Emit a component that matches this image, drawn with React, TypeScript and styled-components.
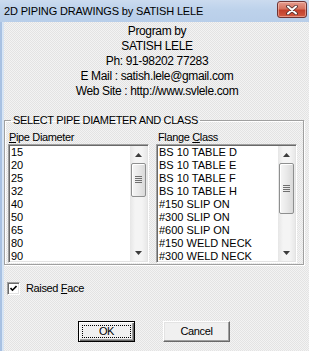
import React from "react";
import styled, { createGlobalStyle } from "styled-components";

const uiFont = `"Liberation Sans", Arial, sans-serif`;

const pipeSizes = [
  "15", "20", "25", "32", "40", "50", "65", "80", "90", "100", "125",
  "150", "200", "250", "300", "350", "400", "450", "500", "550", "600",
];

const flangeClasses = [
  "BS 10 TABLE D", "BS 10 TABLE E", "BS 10 TABLE F", "BS 10 TABLE H",
  "#150 SLIP ON", "#300 SLIP ON", "#600 SLIP ON", "#150 WELD NECK",
  "#300 WELD NECK", "#600 WELD NECK", "#900 WELD NECK", "#1500 WELD NECK",
  "#150 BLIND", "#300 BLIND",
];

const VISIBLE_ROWS = 9;
const TRACK = 81;

const GlobalStyle = createGlobalStyle`
  html, body {
    margin: 0;
    padding: 0;
    width: 309px;
    height: 351px;
    overflow: hidden;
    background: #ececec;
  }
  #root {
    width: 309px;
    height: 351px;
  }
`;

const Window = styled.div`
  width: 313px;
  height: 351px;
  display: flex;
  flex-direction: column;
  font-family: ${uiFont};
  font-size: 11px;
  letter-spacing: -0.35px;
  color: #000;
`;

const TitleBar = styled.div`
  flex: none;
  height: 22px;
  display: flex;
  align-items: flex-start;
  padding: 0 6px 0 4px;
  box-sizing: border-box;
  background: linear-gradient(#cbdbef, #bdd2eb 45%, #b8cee9);
`;

const TitleText = styled.div`
  font-size: 11px;
  letter-spacing: -0.15px;
  line-height: 22px;
  white-space: nowrap;
`;

const CloseButton = styled.div`
  margin-left: auto;
  margin-top: 1px;
  width: 30px;
  height: 17px;
  box-sizing: border-box;
  border: 1px solid #6e3434;
  border-radius: 3px;
  background: linear-gradient(#e59c8f, #d6735f 45%, #c2402c 55%, #d25b42);
  box-shadow: inset 0 0 0 1px rgba(255, 220, 210, 0.45);
  display: flex;
  align-items: center;
  justify-content: center;
`;

const Body = styled.div`
  flex: 1;
  padding: 0 3px 0 2px;
  border-left: 2px solid #a8c1e2;
  box-shadow: inset 2px 0 #d6e4f4;
  background-color: #ececec;
  background-image: repeating-conic-gradient(#f3f3f3 0 25%, #e3e3e3 0 50%);
  background-size: 2px 2px;
  display: flex;
  flex-direction: column;
`;

const Credits = styled.div`
  padding-top: 2px;
  text-align: center;
  font-size: 12px;
  line-height: 15px;
`;

const Group = styled.fieldset`
  margin: 14px 0 0 0;
  width: 300px;
  box-sizing: border-box;
  padding: 3px 6px 1px 3px;
  border: 1px solid #a0a0a0;
  box-shadow: inset 1px 1px #fff, 1px 1px #fff;
`;

const Legend = styled.legend`
  margin-left: 3px;
  padding: 0 2px;
  line-height: 15px;
`;

const Columns = styled.div`
  display: grid;
  grid-template-columns: 141px 141px;
  column-gap: 7px;
`;

const FieldLabel = styled.div<{ $indent: number }>`
  line-height: 13px;
  padding-left: ${(p) => p.$indent}px;
`;

const AccessKey = styled.span`
  text-decoration: underline;
  text-underline-offset: 1px;
`;

const ListBox = styled.div`
  height: 119px;
  box-sizing: border-box;
  display: flex;
  background: #fff;
  border: 1px solid;
  border-color: #a0a0a0 #fff #fff #a0a0a0;
  box-shadow: inset 1px 1px #696969, inset -1px -1px #e3e3e3;
  padding: 1px;
`;

const Rows = styled.div`
  flex: 1;
  overflow: hidden;
`;

const Row = styled.div`
  height: 13px;
  line-height: 13px;
  padding-left: 1px;
  letter-spacing: 0;
  white-space: nowrap;
`;

const ScrollBar = styled.div`
  flex: none;
  width: 17px;
  display: flex;
  flex-direction: column;
  background: linear-gradient(90deg, #e6e6e6, #f4f4f4 30%, #f4f4f4 70%, #e8e8e8);
`;

const ArrowButton = styled.div`
  height: 17px;
  flex: none;
  display: flex;
  align-items: center;
  justify-content: center;
`;

const Track = styled.div`
  flex: 1;
  position: relative;
`;

const Thumb = styled.div`
  position: absolute;
  left: 1px;
  right: 1px;
  box-sizing: border-box;
  border: 1px solid #8e8f8f;
  border-radius: 2px;
  background: linear-gradient(90deg, #f6f6f6, #e9e9e9 50%, #d9d9d9);
  box-shadow: inset 1px 1px #fff;
  display: flex;
  align-items: center;
  justify-content: center;
`;

const CheckRow = styled.label`
  margin: 17px 0 0 3px;
  display: flex;
  align-items: center;
  gap: 6px;
  line-height: 13px;
`;

const CheckBox = styled.span`
  width: 13px;
  height: 13px;
  box-sizing: border-box;
  background: #fff;
  border: 1px solid;
  border-color: #a0a0a0 #fff #fff #a0a0a0;
  box-shadow: inset 1px 1px #696969, inset -1px -1px #e3e3e3;
  display: flex;
  align-items: center;
  justify-content: center;
`;

const ButtonRow = styled.div`
  margin: 26px 0 0 74px;
  display: flex;
  gap: 28px;
`;

const PushButton = styled.div<{ $width: number; $default?: boolean }>`
  width: ${(p) => p.$width}px;
  height: 21px;
  box-sizing: border-box;
  background: #f0f0f0;
  border: 1px solid;
  border-color: ${(p) => (p.$default ? "#000" : "#fff #696969 #696969 #fff")};
  box-shadow: ${(p) =>
    p.$default
      ? "inset 1px 1px #fff, inset -1px -1px #696969, inset -2px -2px #a0a0a0"
      : "inset -1px -1px #a0a0a0, inset 1px 1px #e3e3e3"};
  display: flex;
  align-items: center;
  justify-content: center;
  padding: 3px;
  line-height: 13px;
`;

const FocusRing = styled.div`
  flex: 1;
  align-self: stretch;
  border: 1px dotted #000;
  display: flex;
  align-items: center;
  justify-content: center;
`;

const Arrow = ({ up }: { up?: boolean }) => (
  <svg width="7" height="4" viewBox="0 0 7 4">
    <path d={up ? "M0 4 L3.5 0 L7 4 Z" : "M0 0 L3.5 4 L7 0 Z"} fill="#3c3c3c" />
  </svg>
);

const Grip = () => (
  <svg width="7" height="8" viewBox="0 0 7 8">
    {[0.5, 2.5, 4.5, 6.5].map((y) => (
      <line key={y} x1="0" x2="7" y1={y} y2={y} stroke="#6f6f6f" strokeWidth="1" />
    ))}
  </svg>
);

const List = ({ items }: { items: string[] }) => {
  const visible = items.slice(0, VISIBLE_ROWS);
  const thumbHeight = Math.max(8, Math.round((TRACK * VISIBLE_ROWS) / items.length) - 1);
  return (
    <ListBox>
      <Rows>
        {visible.map((item) => (
          <Row key={item}>{item}</Row>
        ))}
      </Rows>
      <ScrollBar>
        <ArrowButton>
          <Arrow up />
        </ArrowButton>
        <Track>
          <Thumb style={{ top: 0, height: thumbHeight }}>
            <Grip />
          </Thumb>
        </Track>
        <ArrowButton>
          <Arrow />
        </ArrowButton>
      </ScrollBar>
    </ListBox>
  );
};

export default function App() {
  return (
    <>
      <GlobalStyle />
      <Window>
        <TitleBar>
          <TitleText>2D PIPING DRAWINGS by SATISH LELE</TitleText>
          <CloseButton>
            <svg width="12" height="10" viewBox="0 0 12 10">
              <path d="M2 1.5 L10 8.5 M10 1.5 L2 8.5" stroke="#4a2a2a" strokeWidth="3.6" strokeLinecap="round" />
              <path d="M2 1.5 L10 8.5 M10 1.5 L2 8.5" stroke="#fff" strokeWidth="2" strokeLinecap="round" />
            </svg>
          </CloseButton>
        </TitleBar>
        <Body>
          <Credits>
            <div>Program by</div>
            <div>SATISH LELE</div>
            <div>Ph: 91-98202 77283</div>
            <div>E Mail : satish.lele@gmail.com</div>
            <div>Web Site : http://www.svlele.com</div>
          </Credits>
          <Group>
            <Legend>SELECT PIPE DIAMETER AND CLASS</Legend>
            <Columns>
              <div>
                <FieldLabel $indent={1}>
                  <AccessKey>P</AccessKey>ipe Diameter
                </FieldLabel>
                <List items={pipeSizes} />
              </div>
              <div>
                <FieldLabel $indent={2}>
                  Flange <AccessKey>C</AccessKey>lass
                </FieldLabel>
                <List items={flangeClasses} />
              </div>
            </Columns>
          </Group>
          <CheckRow>
            <CheckBox>
              <svg width="7" height="7" viewBox="0 0 7 7">
                <path d="M0.5 3 L2.5 5.2 L6.5 1" stroke="#000" strokeWidth="1.6" fill="none" />
              </svg>
            </CheckBox>
            <span>
              Raised <AccessKey>F</AccessKey>ace
            </span>
          </CheckRow>
          <ButtonRow>
            <PushButton $width={57} $default>
              <FocusRing>OK</FocusRing>
            </PushButton>
            <PushButton $width={67}>Cancel</PushButton>
          </ButtonRow>
        </Body>
      </Window>
    </>
  );
}
